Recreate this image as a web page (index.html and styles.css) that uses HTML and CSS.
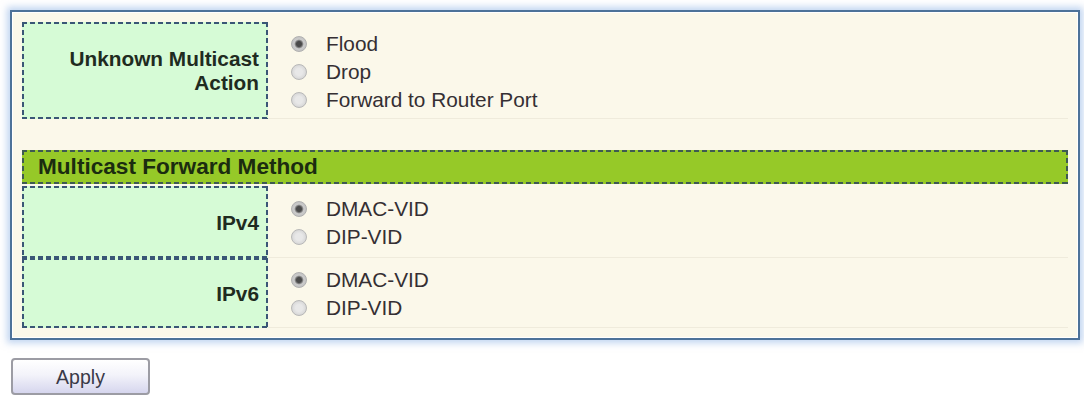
FILE: index.html
```html
<!DOCTYPE html>
<html>
<head>
<meta charset="utf-8">
<link rel="stylesheet" href="styles.css">
</head>
<body>
<div class="panel">
  <div class="row row-first">
    <div class="label"><span>Unknown Multicast<br>Action</span></div>
    <div class="value">
      <div class="opt"><span class="radio checked"></span><span>Flood</span></div>
      <div class="opt"><span class="radio"></span><span>Drop</span></div>
      <div class="opt"><span class="radio"></span><span>Forward to Router Port</span></div>
    </div>
  </div>
  <div class="spacer"></div>
  <div class="header">Multicast Forward Method</div>
  <div class="row row-v4">
    <div class="label"><span>IPv4</span></div>
    <div class="value">
      <div class="opt"><span class="radio checked"></span><span>DMAC-VID</span></div>
      <div class="opt"><span class="radio"></span><span>DIP-VID</span></div>
    </div>
  </div>
  <div class="row row-v6">
    <div class="label"><span>IPv6</span></div>
    <div class="value">
      <div class="opt"><span class="radio checked"></span><span>DMAC-VID</span></div>
      <div class="opt"><span class="radio"></span><span>DIP-VID</span></div>
    </div>
  </div>
</div>
<div class="actions">
  <button class="btn" type="button">Apply</button>
</div>
</body>
</html>
```
FILE: styles.css
```css
html, body {
  margin: 0;
  padding: 0;
  background: #ffffff;
}
body {
  padding: 10px 4px 0 10px;
  font-family: "Liberation Sans", Arial, sans-serif;
  color: #333;
}
.panel {
  border: 2px solid #4d7299;
  background: #fbf8ea;
  box-shadow: 0 0 7px 3px rgba(130, 170, 225, 0.5), inset 0 0 0 1px #ffffff;
  padding: 10px;
  box-sizing: content-box;
  width: 1046px;
}
.row {
  display: grid;
  grid-template-columns: 246px 1fr;
}
.row-first {
  height: 97px;
}
.row-v4 {
  height: 72px;
}
.row-v6 {
  height: 70px;
}
.label {
  display: flex;
  align-items: center;
  justify-content: flex-end;
  text-align: right;
  padding-right: 9px;
  font-weight: bold;
  font-size: 20.8px;
  line-height: 24px;
  color: #1f2b1f;
  background-color: #d6fbd6;
  background-image:
    repeating-linear-gradient(90deg, #3a5676 0 5px, transparent 5px 8px),
    repeating-linear-gradient(90deg, #3a5676 0 5px, transparent 5px 8px),
    repeating-linear-gradient(180deg, #3a5676 0 5px, transparent 5px 8px),
    repeating-linear-gradient(180deg, #3a5676 0 5px, transparent 5px 8px);
  background-size: 100% 2px, 100% 2px, 2px 100%, 2px 100%;
  background-position: top left, bottom left, top left, top right;
  background-repeat: no-repeat;
}
.label span {
  padding-top: 1px;
}
.value {
  display: flex;
  flex-direction: column;
  justify-content: center;
  padding: 3px 0 0 23px;
  border-bottom: 1px solid #efebdc;
  font-size: 20.8px;
  color: #352f33;
}
.opt {
  display: flex;
  align-items: center;
  height: 28px;
}
.radio {
  width: 14px;
  height: 14px;
  border-radius: 50%;
  border: 1px solid #b8b8b8;
  background: radial-gradient(circle at 50% 50%, #e8e8e8 0 35%, #cbcbcb 100%);
  margin-right: 19px;
  flex: none;
}
.radio.checked {
  border-color: #b0b0b0;
  background: radial-gradient(circle at 50% 50%, #4a4a4a 0 2.5px, #7a7a7a 3.5px, #cbcbcb 4.8px, #bababa 100%);
}
.spacer {
  height: 31px;
}
.header {
  height: 34px;
  display: flex;
  align-items: center;
  padding-left: 16px;
  font-weight: bold;
  font-size: 22.6px;
  color: #1b2c10;
  background-color: #96c928;
  background-image:
    repeating-linear-gradient(90deg, #3e5a52 0 5px, transparent 5px 8px),
    repeating-linear-gradient(90deg, #3e5a52 0 5px, transparent 5px 8px),
    repeating-linear-gradient(180deg, #3e5a52 0 5px, transparent 5px 8px),
    repeating-linear-gradient(180deg, #3e5a52 0 5px, transparent 5px 8px);
  background-size: 100% 2px, 100% 2px, 2px 100%, 2px 100%;
  background-position: top left, bottom left, top left, top right;
  background-repeat: no-repeat;
  margin-bottom: 2px;
}
.actions {
  padding-top: 18px;
  padding-left: 1px;
}
.btn {
  width: 139px;
  height: 37px;
  border: 2px solid #9c9ca4;
  border-radius: 4px;
  background: linear-gradient(#ffffff, #f3f3fa 45%, #d6d6ee);
  font-family: "Liberation Sans", Arial, sans-serif;
  font-size: 19.5px;
  color: #3a3a48;
  padding: 2px 0 0;
}
```
